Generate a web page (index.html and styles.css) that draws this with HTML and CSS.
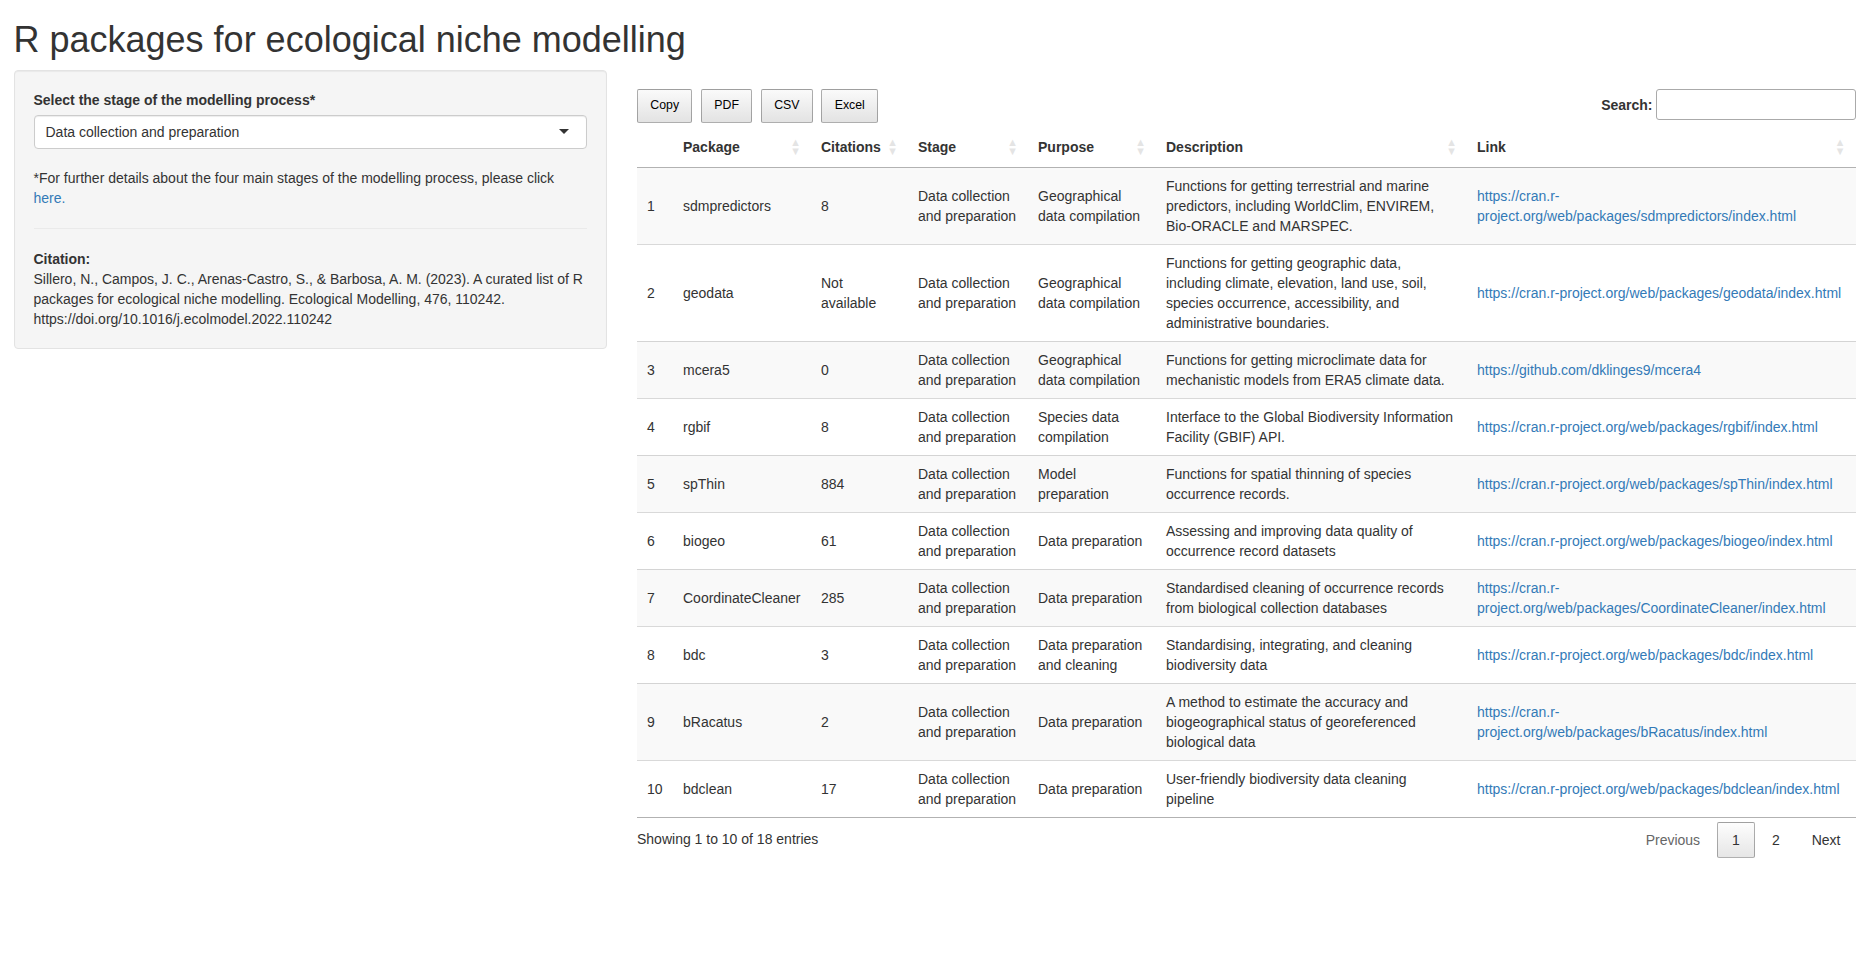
FILE: index.html
```html
<!DOCTYPE html>
<html lang="en">
<head>
<meta charset="utf-8">
<title>R packages for ecological niche modelling</title>
<link rel="stylesheet" href="styles.css">
</head>
<body>
<div class="container">
  <h1 class="title">R packages for ecological niche modelling</h1>
  <div class="row">
    <div class="sidebar">
      <div class="well">
        <div class="form-group">
          <label class="control-label">Select the stage of the modelling process*</label>
          <div class="select">
            <span class="select-value">Data collection and preparation</span>
            <span class="caret"></span>
          </div>
        </div>
        <p class="note">*For further details about the four main stages of the modelling process, please click <a href="#">here.</a></p>
        <hr>
        <p class="citation"><b>Citation:</b><br>Sillero, N., Campos, J. C., Arenas-Castro, S., &amp; Barbosa, A. M. (2023). A curated list of R packages for ecological niche modelling. Ecological Modelling, 476, 110242. https://doi.org/10.1016/j.ecolmodel.2022.110242</p>
      </div>
    </div>
    <div class="main">
      <div class="dt-toolbar">
        <div class="dt-buttons">
          <button class="dt-button" type="button">Copy</button>
          <button class="dt-button" type="button">PDF</button>
          <button class="dt-button" type="button">CSV</button>
          <button class="dt-button" type="button">Excel</button>
        </div>
        <label class="dt-filter">Search:<input type="search"></label>
      </div>
      <table class="dt">
        <colgroup>
          <col class="c-num"><col class="c-pkg"><col class="c-cit"><col class="c-stage"><col class="c-purp"><col class="c-desc"><col class="c-link">
        </colgroup>
        <thead>
          <tr>
            <th class="no-sort"></th>
            <th class="sorting">Package</th>
            <th class="sorting">Citations</th>
            <th class="sorting">Stage</th>
            <th class="sorting">Purpose</th>
            <th class="sorting">Description</th>
            <th class="sorting">Link</th>
          </tr>
        </thead>
        <tbody>
          <tr>
            <td>1</td><td>sdmpredictors</td><td>8</td><td>Data collection and preparation</td><td>Geographical data compilation</td>
            <td>Functions for getting terrestrial and marine predictors, including WorldClim, ENVIREM, Bio-ORACLE and MARSPEC.</td>
            <td><a href="#">https://cran.r-project.org/web/packages/sdmpredictors/index.html</a></td>
          </tr>
          <tr>
            <td>2</td><td>geodata</td><td>Not available</td><td>Data collection and preparation</td><td>Geographical data compilation</td>
            <td>Functions for getting geographic data, including climate, elevation, land use, soil, species occurrence, accessibility, and administrative boundaries.</td>
            <td><a href="#">https://cran.r-project.org/web/packages/geodata/index.html</a></td>
          </tr>
          <tr>
            <td>3</td><td>mcera5</td><td>0</td><td>Data collection and preparation</td><td>Geographical data compilation</td>
            <td>Functions for getting microclimate data for mechanistic models from ERA5 climate data.</td>
            <td><a href="#">https://github.com/dklinges9/mcera4</a></td>
          </tr>
          <tr>
            <td>4</td><td>rgbif</td><td>8</td><td>Data collection and preparation</td><td>Species data compilation</td>
            <td>Interface to the Global Biodiversity Information Facility (GBIF) API.</td>
            <td><a href="#">https://cran.r-project.org/web/packages/rgbif/index.html</a></td>
          </tr>
          <tr>
            <td>5</td><td>spThin</td><td>884</td><td>Data collection and preparation</td><td>Model preparation</td>
            <td>Functions for spatial thinning of species occurrence records.</td>
            <td><a href="#">https://cran.r-project.org/web/packages/spThin/index.html</a></td>
          </tr>
          <tr>
            <td>6</td><td>biogeo</td><td>61</td><td>Data collection and preparation</td><td>Data preparation</td>
            <td>Assessing and improving data quality of occurrence record datasets</td>
            <td><a href="#">https://cran.r-project.org/web/packages/biogeo/index.html</a></td>
          </tr>
          <tr>
            <td>7</td><td>CoordinateCleaner</td><td>285</td><td>Data collection and preparation</td><td>Data preparation</td>
            <td>Standardised cleaning of occurrence records from biological collection databases</td>
            <td><a href="#">https://cran.r-project.org/web/packages/CoordinateCleaner/index.html</a></td>
          </tr>
          <tr>
            <td>8</td><td>bdc</td><td>3</td><td>Data collection and preparation</td><td>Data preparation and cleaning</td>
            <td>Standardising, integrating, and cleaning biodiversity data</td>
            <td><a href="#">https://cran.r-project.org/web/packages/bdc/index.html</a></td>
          </tr>
          <tr>
            <td>9</td><td>bRacatus</td><td>2</td><td>Data collection and preparation</td><td>Data preparation</td>
            <td>A method to estimate the accuracy and biogeographical status of georeferenced biological data</td>
            <td><a href="#">https://cran.r-project.org/web/packages/bRacatus/index.html</a></td>
          </tr>
          <tr>
            <td>10</td><td>bdclean</td><td>17</td><td>Data collection and preparation</td><td>Data preparation</td>
            <td>User-friendly biodiversity data cleaning pipeline</td>
            <td><a href="#">https://cran.r-project.org/web/packages/bdclean/index.html</a></td>
          </tr>
        </tbody>
      </table>
      <div class="dt-footer">
        <div class="dt-info">Showing 1 to 10 of 18 entries</div>
        <div class="dt-paginate"><a class="pg disabled">Previous</a><span><a class="pg current">1</a><a class="pg" href="#">2</a></span><a class="pg" href="#">Next</a></div>
      </div>
    </div>
  </div>
</div>
</body>
</html>
```
FILE: styles.css
```css
* { box-sizing: border-box; }
html, body { margin: 0; }
body {
  font-family: "Liberation Sans", Arial, Helvetica, sans-serif;
  font-size: 14px;
  line-height: 1.42857143;
  color: #333;
  background: #fff;
}
a { color: #337ab7; text-decoration: none; }

.container { padding: 0 12.5px 0 13.5px; }
.title {
  font-size: 36px;
  font-weight: 500;
  line-height: 1.1;
  margin: 20px 0 10px;
}
.row {
  display: grid;
  grid-template-columns: 593fr 1218.5fr;
  column-gap: 30.5px;
}
.sidebar, .main { min-width: 0; }

.well {
  padding: 19px;
  background: #f5f5f5;
  border: 1px solid #e3e3e3;
  border-radius: 4px;
  box-shadow: inset 0 1px 1px rgba(0,0,0,.05);
  margin-bottom: 20px;
}
.form-group { margin-bottom: 19px; }
.control-label { display: inline-block; font-weight: bold; margin-bottom: 5px; }
.select {
  display: flex;
  align-items: center;
  justify-content: space-between;
  height: 34px;
  padding: 6px 17px 6px 11px;
  background: #fff;
  border: 1px solid #ccc;
  border-radius: 4px;
  box-shadow: inset 0 1px 1px rgba(0,0,0,.075);
}
.caret {
  width: 0;
  height: 0;
  border-style: solid;
  border-width: 5px 5px 0 5px;
  border-color: #333 transparent transparent transparent;
}
.note { margin: 0; }
hr { margin: 20px 0; border: 0; border-top: 1px solid #eaeaea; }
.citation { margin: 0; }

.dt-toolbar {
  display: flex;
  justify-content: space-between;
  align-items: flex-start;
  margin-top: 19.5px;
}
.dt-buttons { display: flex; gap: 8.6px; }
.dt-button {
  font-family: inherit;
  font-size: 12.32px;
  line-height: 1.6em;
  padding: .5em 1em;
  border: 1px solid rgba(0,0,0,.3);
  border-radius: 2px;
  color: #000;
  background: linear-gradient(to bottom, #fafafa 0%, #e3e3e3 100%);
  margin: 0;
}
.dt-filter { display: flex; align-items: center; font-weight: bold; }
.dt-filter input {
  margin-left: 3px;
  width: 200px;
  height: 31px;
  border: 1px solid #aaa;
  border-radius: 3px;
  padding: 5px;
  font: inherit;
  font-weight: normal;
  background: transparent;
}

.dt {
  width: 100%;
  table-layout: fixed;
  border-collapse: separate;
  border-spacing: 0;
  margin-top: 4px;
  border-bottom: 1px solid rgba(0,0,0,.3);
}
.c-num { width: 36px; }
.c-pkg { width: 138px; }
.c-cit { width: 97px; }
.c-stage { width: 120px; }
.c-purp { width: 128px; }
.c-desc { width: 311px; }
.dt th {
  position: relative;
  text-align: left;
  font-weight: bold;
  padding: 10px 26px 10px 10px;
  border-bottom: 1px solid rgba(0,0,0,.3);
}
.dt th.no-sort { padding-right: 10px; }
.dt th.sorting::before,
.dt th.sorting::after {
  position: absolute;
  right: 10px;
  display: block;
  opacity: .125;
  line-height: 9px;
  font-size: .8em;
}
.dt th.sorting::before { content: "\25B2"; bottom: 50%; }
.dt th.sorting::after { content: "\25BC"; top: 50%; }
.dt td {
  padding: 8px 10px;
  border-top: 1px solid rgba(0,0,0,.15);
  vertical-align: middle;
}
.dt tbody tr:first-child td { border-top: 0; }
.dt tbody tr:nth-child(odd) { background: #f9f9f9; }

.dt-footer { display: flex; justify-content: space-between; align-items: flex-start; }
.dt-info { padding-top: .755em; }
.dt-paginate { padding-top: .25em; }
.pg {
  display: inline-block;
  min-width: 1.5em;
  padding: .5em 1em;
  margin-left: 2px;
  text-align: center;
  border: 1px solid transparent;
  border-radius: 2px;
  color: #333;
}
a.pg { color: #333; }
.pg.disabled { color: #666; }
.pg.current {
  border: 1px solid rgba(0,0,0,.3);
  background: linear-gradient(to bottom, #fdfdfd 0%, #e6e6e6 100%);
}
```
